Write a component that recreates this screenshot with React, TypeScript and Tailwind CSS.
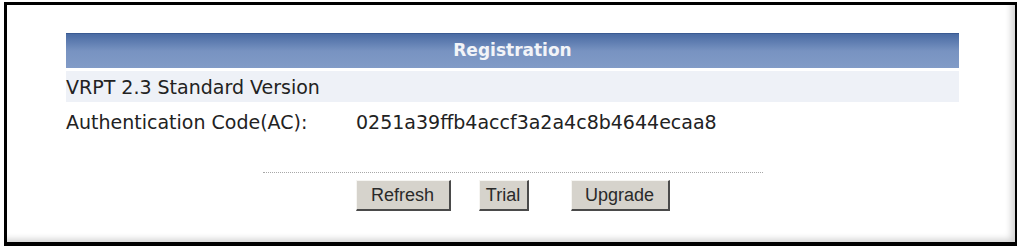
import React from "react";

function Btn({ label, w, ml }: { label: string; w: string; ml: string }) {
  return (
    <button
      className={`${w} ${ml} h-[31px] bg-[#d6d3cc] text-[#2a2a2a] text-[18px] border-t border-l border-b-2 border-r-2 border-t-[#f6f5f2] border-l-[#f6f5f2] border-b-[#4a4a4a] border-r-[#4a4a4a] flex items-center justify-center`}
      style={{ fontFamily: '"Liberation Sans", Arial, sans-serif' }}
    >
      {label}
    </button>
  );
}

export default function App() {
  return (
    <div className="w-[1017px] h-[246px] bg-white pl-[4px] pt-[2px] overflow-hidden">
      <div className="w-[1013px] h-[244px] border-l-[3px] border-t-[3px] border-b-[4px] border-r-[2px] border-black bg-white shadow-[inset_-7px_-6px_6px_-3px_#d4d4d4]">
        <div
          className="pt-[28px] pl-[59px] pr-[56px] text-[19px] text-[#222]"
          style={{ fontFamily: '"DejaVu Sans", Verdana, sans-serif' }}
        >
          <div className="h-[35px] bg-gradient-to-b from-[#4a6ba3] via-[#7893c1] to-[#819bc7] border-t border-[#3a5a92] flex items-center justify-center text-[#f2f4f8] font-bold text-[17px]">
            Registration
          </div>
          <div className="mt-[3px] h-[31px] bg-[#eef1f7] flex items-center pt-[2px]">
            VRPT 2.3 Standard Version
          </div>
          <div className="h-[40px] flex items-center">
            <span className="w-[290px]">Authentication Code(AC):</span>
            <span>0251a39ffb4accf3a2a4c8b4644ecaa8</span>
          </div>
          <div className="mt-[30px] mx-auto w-[500px] border-t border-dotted border-[#a8a8a8]"></div>
          <div className="mt-[7px] flex justify-center">
            <Btn label="Refresh" w="w-[95px]" ml="ml-0" />
            <Btn label="Trial" w="w-[50px]" ml="ml-[28px]" />
            <Btn label="Upgrade" w="w-[99px]" ml="ml-[42px]" />
          </div>
        </div>
      </div>
    </div>
  );
}
